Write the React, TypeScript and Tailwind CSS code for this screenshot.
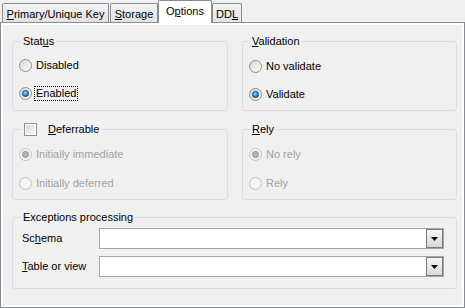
import type { ReactNode } from "react";

function Radio({ checked, disabled }: { checked?: boolean; disabled?: boolean }) {
  return (
    <svg width="13" height="13" viewBox="0 0 13 13" className="shrink-0">
      <defs>
        <linearGradient id="rb-fill" x1="0" y1="0" x2="1" y2="1">
          <stop offset="0" stopColor="#d6d6d6" />
          <stop offset="1" stopColor="#ffffff" />
        </linearGradient>
        <radialGradient id="rb-dot" cx="0.45" cy="0.4" r="0.6">
          <stop offset="0" stopColor="#9ee0ff" />
          <stop offset="0.55" stopColor="#2f8fd8" />
          <stop offset="1" stopColor="#0b4f99" />
        </radialGradient>
      </defs>
      <circle
        cx="6.5"
        cy="6.5"
        r="6"
        fill={disabled ? "#f4f4f4" : "url(#rb-fill)"}
        stroke={disabled ? "#c2c2c2" : "#8e8f8f"}
      />
      {checked && (
        <circle
          cx="6.5"
          cy="6.5"
          r="3.2"
          fill={disabled ? "#b0b0b0" : "url(#rb-dot)"}
          stroke={disabled ? "#8c8c8c" : "#1a4a80"}
          strokeWidth="0.6"
        />
      )}
    </svg>
  );
}

function Checkbox() {
  return (
    <span className="flex h-[13px] w-[13px] shrink-0 border border-[#8e8f8f] bg-white p-px">
      <span className="h-full w-full bg-linear-to-br from-[#d9d9d9] to-[#f7f7f7]" />
    </span>
  );
}

function Option({
  children,
  checked,
  disabled,
  focused,
}: {
  children: ReactNode;
  checked?: boolean;
  disabled?: boolean;
  focused?: boolean;
}) {
  return (
    <div className="flex h-[15px] items-center">
      <Radio checked={checked} disabled={disabled} />
      {focused ? (
        <span className="ml-[2px] border border-dotted border-black px-px">{children}</span>
      ) : (
        <span className={disabled ? "ml-[4px] text-[#a3a3a3]" : "ml-[4px]"}>{children}</span>
      )}
    </div>
  );
}

function Combo() {
  return (
    <div className="flex h-[21px] w-[345px] border border-[#a5a5a5] bg-white">
      <div className="flex-1" />
      <div className="flex w-[17px] items-center justify-center border border-[#7b7b7b] bg-linear-to-b from-[#f6f6f6] to-[#d9d9d9]">
        <svg width="7" height="4" viewBox="0 0 7 4">
          <path d="M0 0h7L3.5 4z" fill="#000" />
        </svg>
      </div>
    </div>
  );
}

export default function App() {
  return (
    <div className="h-[308px] w-[465px] overflow-hidden bg-[#f0f0f0] font-['Liberation_Sans',Arial,sans-serif] text-[11px] leading-[13px] text-black">
      <div className="flex h-[22px] items-end pl-[2px]">
        <div className="mr-px flex h-[19px] w-[107px] items-center justify-center rounded-t-[2px] border border-b-0 border-[#898c95] bg-linear-to-b from-[#f4f4f4] to-[#e2e2e2] pt-[2px]">
          <span>
            <span className="underline">P</span>rimary/Unique Key
          </span>
        </div>
        <div className="flex h-[19px] w-[48px] items-center justify-center rounded-t-[2px] border border-b-0 border-[#898c95] bg-linear-to-b from-[#f4f4f4] to-[#e2e2e2] pt-[2px]">
          <span>
            <span className="underline">S</span>torage
          </span>
        </div>
        <div className="relative z-10 -mb-px flex h-[23px] w-[54px] items-center justify-center rounded-t-[2px] border border-b-0 border-[#898c95] bg-white pb-[2px]">
          <span>
            O<span className="underline">p</span>tions
          </span>
        </div>
        <div className="flex h-[19px] w-[30px] items-center justify-center rounded-t-[2px] border border-b-0 border-[#898c95] bg-linear-to-b from-[#f4f4f4] to-[#e2e2e2] pt-[2px]">
          <span>
            DD<span className="underline">L</span>
          </span>
        </div>
      </div>

      <div className="h-[286px] border border-[#898c95]">
        <div className="h-full border-2 border-white bg-[#f0f0f0] pl-[9px] pt-[10px]">
          <div className="grid grid-cols-[216px_215px] gap-x-[14px]">
            <fieldset className="h-[76px] rounded-[3px] border border-[#d5dfe5]">
              <legend className="ml-[8px] px-[2px]">
                Stat<span className="underline">u</span>s
              </legend>
              <div className="flex flex-col gap-[13px] pl-[6px] pt-[10px]">
                <Option>Disabled</Option>
                <Option checked focused>
                  Enabled
                </Option>
              </div>
            </fieldset>
            <fieldset className="h-[76px] rounded-[3px] border border-[#d5dfe5]">
              <legend className="ml-[7px] px-[2px]">
                <span className="underline">V</span>alidation
              </legend>
              <div className="flex flex-col gap-[13px] pl-[6px] pt-[11px]">
                <Option>No validate</Option>
                <Option checked>Validate</Option>
              </div>
            </fieldset>
          </div>

          <div className="mt-[12px] grid grid-cols-[216px_215px] gap-x-[14px]">
            <fieldset className="h-[77px] rounded-[3px] border border-[#d5dfe5]">
              <legend className="ml-[9px] px-[2px]">
                <span className="flex items-center">
                  <Checkbox />
                  <span className="ml-[11px]">
                    <span className="underline">D</span>eferrable
                  </span>
                </span>
              </legend>
              <div className="flex flex-col gap-[14px] pl-[6px] pt-[11px]">
                <Option checked disabled>
                  Initially immediate
                </Option>
                <Option disabled>Initially deferred</Option>
              </div>
            </fieldset>
            <fieldset className="h-[77px] rounded-[3px] border border-[#d5dfe5]">
              <legend className="ml-[7px] px-[2px]">
                <span className="underline">R</span>ely
              </legend>
              <div className="flex flex-col gap-[14px] pl-[6px] pt-[11px]">
                <Option checked disabled>
                  No rely
                </Option>
                <Option disabled>Rely</Option>
              </div>
            </fieldset>
          </div>

          <fieldset className="mt-[11px] h-[78px] w-[445px] rounded-[3px] border border-[#d5dfe5]">
            <legend className="ml-[8px] px-[2px]">Exceptions processing</legend>
            <div className="flex flex-col gap-[7px] pl-[9px] pt-[4px]">
              <div className="flex items-center">
                <span className="w-[77px]">
                  Sc<span className="underline">h</span>ema
                </span>
                <Combo />
              </div>
              <div className="flex items-center">
                <span className="w-[77px]">
                  <span className="underline">T</span>able or view
                </span>
                <Combo />
              </div>
            </div>
          </fieldset>
        </div>
      </div>
    </div>
  );
}
